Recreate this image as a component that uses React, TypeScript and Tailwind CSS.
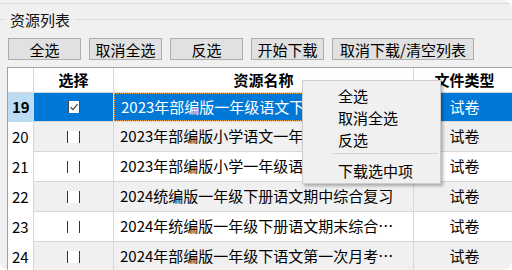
import React from "react";

const rows = [
  { n: 19, name: "2023年部编版一年级语文下册期末测试卷及答案", sel: true },
  { n: 20, name: "2023年部编版小学语文一年级下册期末测试卷", sel: false },
  { n: 21, name: "2023年部编版小学一年级语文下册期中测试卷", sel: false },
  { n: 22, name: "2024统编版一年级下册语文期中综合复习", sel: false },
  { n: 23, name: "2024年统编版一年级下册语文期末综合测试卷", sel: false },
  { n: 24, name: "2024年部编版一年级下语文第一次月考试卷", sel: false },
];

function Check({ checked }: { checked: boolean }) {
  if (checked) {
    return (
      <div className="w-[12px] h-[12px] bg-white border-l border-r border-[#444] flex items-center justify-center">
        <svg width="10" height="10" viewBox="0 0 10 10">
          <path d="M1.5 5.2 L4 7.6 L8.6 2.2" stroke="#444" strokeWidth="1.2" fill="none" />
        </svg>
      </div>
    );
  }
  return <div className="w-[13px] h-[12px] bg-white border-l border-r border-[#333]" />;
}

export default function App() {
  const font = { fontFamily: '"Noto Sans CJK SC", "Microsoft YaHei", sans-serif' };
  return (
    <div className="w-[512px] h-[270px] bg-white overflow-hidden" style={font}>
      <div className="relative w-[512px] h-[270px] bg-[#f0f0f0] rounded-tr-[9px] rounded-b-[9px] overflow-hidden text-[15px] text-black">
        <div className="h-[3px]" />
        <div className="border-t border-[#dcdcdc]" />
        <div className="flex items-center h-[31px]">
          <div className="w-[5px] h-px bg-[#dcdcdc]" />
          <div className="px-[5px] leading-[20px] text-[#111]">资源列表</div>
          <div className="flex-1 h-px bg-[#dcdcdc]" />
        </div>
        <div className="flex gap-[8px] ml-[8px] mt-[3px]">
          {[
            ["全选", "w-[73px]"],
            ["取消全选", "w-[73px]"],
            ["反选", "w-[73px]"],
            ["开始下载", "w-[73px]"],
            ["取消下载/清空列表", "w-[142px]"],
          ].map(([t, w]) => (
            <div
              key={t}
              className={`${w} h-[22px] border border-[#adadad] bg-[#e1e1e1] flex items-center justify-center leading-none whitespace-nowrap`}
            >
              {t}
            </div>
          ))}
        </div>
        <div className="mt-[7px] ml-[7px] border-l border-t border-[#a0a0a0] bg-white w-[520px]">
          <div className="flex h-[25px] border-b border-[#d8d8d8] font-bold">
            <div className="w-[26px] border-r border-[#d8d8d8]" />
            <div className="w-[80px] border-r border-[#d8d8d8] flex items-center justify-center">选择</div>
            <div className="w-[300px] border-r border-[#d8d8d8] flex items-center justify-center">资源名称</div>
            <div className="w-[101px] flex items-center justify-center whitespace-nowrap">文件类型</div>
          </div>
          {rows.map((r, i) => {
            const grey = i % 2 === 1;
            const bg = r.sel ? "bg-[#0078d7] text-white" : grey ? "bg-[#f0f0f0]" : "bg-white";
            return (
              <div key={r.n} className={`flex ${i === 0 ? "h-[29px]" : "h-[30px]"}`}>
                <div
                  className={`w-[26px] border-r border-[#d8d8d8] flex items-center pl-[4px] ${
                    r.sel ? "bg-[#bcdcf4] font-bold" : "bg-white"
                  }`}
                >
                  {r.n}
                </div>
                <div className={`w-[80px] border-r border-b border-[#d8d8d8] flex items-center justify-center ${bg}`}>
                  <Check checked={r.sel} />
                </div>
                <div className={`w-[300px] border-r border-b border-[#d8d8d8] ${bg} flex items-center`}>
                  <div
                    className={`w-full h-full flex items-center px-[6px] ${
                      r.sel ? "border border-dotted border-[#f0a040]" : ""
                    }`}
                  >
                    <span className="truncate block w-full">{r.name}</span>
                  </div>
                </div>
                <div className={`w-[101px] border-b border-[#d8d8d8] flex items-center justify-center ${bg}`}>试卷</div>
              </div>
            );
          })}
        </div>

        <div className="absolute left-[302px] top-[80px] w-[139px] h-[104px] bg-[#f0f0f0] border border-[#cccccc] shadow-[2px_2px_3px_rgba(0,0,0,0.3)] pt-[3px]">
          {["全选", "取消全选", "反选"].map((t) => (
            <div key={t} className="h-[22px] flex items-center pl-[35px] leading-none">
              {t}
            </div>
          ))}
          <div className="h-[9px] pt-[3px] pl-[30px] pr-[2px]">
            <div className="h-px bg-[#d4d4d4]" />
          </div>
          <div className="h-[22px] flex items-center pl-[35px] leading-none">下载选中项</div>
        </div>
      </div>
    </div>
  );
}
